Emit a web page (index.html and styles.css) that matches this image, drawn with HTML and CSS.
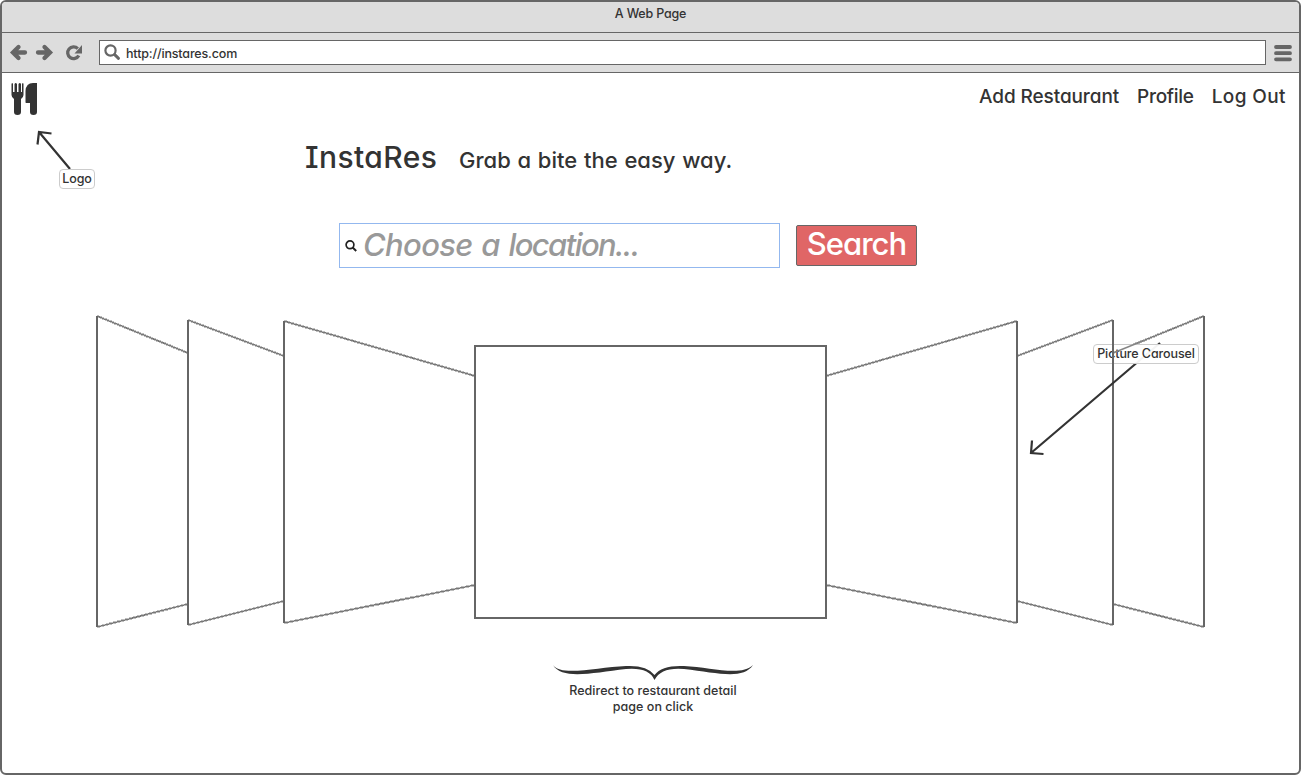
FILE: index.html
```html
<!DOCTYPE html>
<html lang="en">
<head>
<meta charset="utf-8">
<title>A Web Page</title>
<link rel="stylesheet" href="styles.css">
</head>
<body>
<div class="window">
  <header class="titlebar"><span class="window-title">A Web Page</span></header>
  <div class="toolbar">
    <svg class="nav-icons" viewBox="0 0 84 24" width="84" height="24">
      <g fill="none" stroke="#666" stroke-width="4.300">
        <path d="M25 11.500H14M18.500 6L13 11.500L18.500 17" stroke-linecap="round"/>
        <path d="M38 11.500H49M44.500 6L50 11.500L44.500 17" stroke-linecap="round"/>
        <path d="M77.800 7.600A5.900 5.900 0 1 0 78.800 14.500" stroke-width="3.300"/>
      </g>
      <path d="M82 4V12.500H74.500Z" fill="#666"/>
    </svg>
    <div class="address">
      <svg viewBox="0 0 18 18" width="18" height="18"><circle cx="6.500" cy="6.500" r="5.100" fill="none" stroke="#666" stroke-width="2.200"/><path d="M10.700 10.700L14.500 14.300" stroke="#666" stroke-width="3" stroke-linecap="round"/></svg>
      <span class="url">http://instares.com</span>
    </div>
    <svg class="menu-icon" viewBox="0 0 18 18" width="18" height="18"><path d="M2 3H16M2 9.200H16M2 15.300H16" stroke="#666" stroke-width="3.800" stroke-linecap="round"/></svg>
  </div>
  <main class="page">
    <nav class="site-nav">
      <svg class="logo" viewBox="0 0 28 34" width="28" height="34" fill="#333">
        <path d="M.5 2Q1.200 0 2 2V10H3.500V2Q4.700 0 6 2V10H7.500V2Q9 0 10 2V10H11V2Q12 0 12.500 2V13Q12.500 15 10 17V30Q10 33 6.500 33Q3 33 3 30V17Q.5 15 .5 13Z"/>
        <path d="M26 1V30Q26 33 22.500 33Q19 33 19 30V21H15Q14.500 21 14.500 20V9Q15 1 22 1Z"/>
      </svg>
      <div class="links"><a class="link-add">Add Restaurant</a><a class="link-profile">Profile</a><a class="link-logout">Log Out</a></div>
    </nav>
    <section class="hero"><h1>InstaRes</h1><p>Grab a bite the easy way.</p></section>
    <form class="search">
      <div class="field">
        <svg viewBox="0 0 12 12" width="12" height="12" fill="none" stroke="#222"><circle cx="5" cy="4.800" r="3.900" stroke-width="1.700"/><path d="M7.700 7.500L11.200 11" stroke-width="2"/></svg>
        <span class="placeholder">Choose a <span class="tight">location...</span></span>
      </div>
      <button type="button">Search</button>
    </form>
    <svg class="carousel" viewBox="96 314 1110 316" width="1110" height="316" fill="none" stroke="#666">
      <defs>
        <path id="slants" d="M97 316L188 353M188 320L284 356M284 321L475 376M97 627L188 604M188 625L284 601M284 623L475 585M1204 316L1113 353M1113 320L1017 356M1017 321L826 376M1204 627L1113 604M1113 625L1017 601M1017 623L826 585"/>
      </defs>
      <g shape-rendering="crispEdges">
        <use href="#slants" stroke="#bdbdbd" stroke-width="2.600"/>
        <use href="#slants" stroke="#777" stroke-width="1"/>
      </g>
      <path stroke-width="2" d="M97 316V627M188 320V625M284 321V623M1017 321V623M1113 320V625M1204 316V627M475 346H826V618H475Z"/>
    </svg>
    <div class="redirect-note">
      <svg viewBox="553 664 200 17" width="200" height="17" fill="#333"><path d="M553 665C561 677 598 667 626 666Q647 665 654.500 675Q662 665 684 666C710 667 741 677 753 665C743 680 718 673 684 669Q661 667 654.500 680Q649 667 626 669C592 673 562 680 553 665Z"/></svg>
      <p>Redirect to restaurant detail<br>page on click</p>
    </div>
    <svg class="arrow arrow-logo" viewBox="34 128 40 44" width="40" height="44"><path d="M70 169L39 132M37.500 144.500L39 132L51.500 133.500"/></svg>
    <span class="tag tag-logo">Logo</span>
    <svg class="arrow arrow-carousel" viewBox="1026 338 140 122" width="140" height="122"><path d="M1160 343L1031 453M1032 440.500L1031 453L1043.500 454"/></svg>
    <span class="tag tag-carousel">Picture Carousel</span>
    <svg class="over-tag" viewBox="1090 340 112 28" width="112" height="28" fill="none"><path d="M1155 336L1113 353" stroke="#858585" stroke-width="1.500"/><path d="M1113 340V368" stroke="#666" stroke-width="2"/></svg>
  </main>
</div>
</body>
</html>
```
FILE: styles.css
```css
* { box-sizing: border-box; }
body { margin: 0; background: #fff; color: #333; font-family: Inter, "Open Sans", sans-serif; font-feature-settings: "cv11", "ss03"; font-size: 12.5px; font-weight: 500; letter-spacing: -.1px; }
h1, p { margin: 0; font-weight: 500; }
svg { display: block; flex: none; }
.window { width: 1301px; height: 775px; border: 2px solid #666; border-radius: 6px; display: flex; flex-direction: column; overflow: hidden; background: #fff; }
.titlebar { height: 31px; background: #ddd; border-bottom: 1px solid #666; text-align: center; padding-top: 3px; line-height: 17px; letter-spacing: -.2px; }
.toolbar { height: 40px; background: #ddd; border-bottom: 1px solid #666; display: flex; align-items: center; }
.nav-icons { margin-left: -2px; margin-right: 15px; }
.address { height: 25px; width: 1167px; background: #fff; border: 1px solid #666; display: flex; align-items: center; padding-left: 4px; gap: 4px; }
.url { letter-spacing: -.15px; padding-top: 1px; }
.menu-icon { margin-left: 8px; }
.page { position: relative; flex: 1; }
.site-nav { height: 56px; display: flex; justify-content: space-between; padding: 9px 13px 0 9px; }
.links { display: flex; gap: 18px; padding-top: 1px; font-size: 19px; line-height: 28px; white-space: nowrap; }
.link-add { letter-spacing: -.1px; }
.link-profile { letter-spacing: -.3px; }
.link-logout { letter-spacing: .4px; }
.hero { display: flex; align-items: baseline; height: 94px; padding: 6px 0 0 303px; gap: 23px; white-space: nowrap; }
.hero h1 { width: 131px; font-size: 30px; line-height: 44px; letter-spacing: .4px; font-feature-settings: "cv11", "ss03", "cv08"; }
.hero p { font-size: 22px; letter-spacing: 0; word-spacing: .9px; }
.search { display: flex; align-items: center; margin-left: 337px; height: 45px; gap: 16px; }
.field { width: 441px; height: 45px; border: 1px solid #93b8ef; display: flex; align-items: center; padding-left: 5px; gap: 6px; }
.placeholder { color: #999; font-size: 31px; font-style: italic; letter-spacing: -.65px; word-spacing: 1px; white-space: nowrap; padding-bottom: 2px; }
.tight { letter-spacing: -1.6px; }
button { width: 121px; height: 41px; border: 1px solid #666; border-radius: 2px; background: #e06666; color: #fff; font: inherit; font-feature-settings: inherit; font-size: 31px; line-height: 36px; letter-spacing: -1px; padding: 0 0 3px; }
.carousel { margin: 46px 0 0 94px; }
.redirect-note { width: 200px; margin: 34px 0 0 551px; text-align: center; line-height: 16px; letter-spacing: .03px; white-space: nowrap; }
.redirect-note p { padding-top: 2px; }
.arrow { position: absolute; fill: none; stroke: #333; stroke-width: 2.2; }
.arrow-logo { left: 32px; top: 55px; }
.arrow-carousel { left: 1024px; top: 265px; }
.tag { position: absolute; background: rgba(255,255,255,.95); border: 1px solid #ccc; border-radius: 4px; height: 20px; line-height: 17px; text-align: center; white-space: nowrap; }
.tag-logo { left: 57px; top: 96px; width: 36px; }
.tag-carousel { left: 1091px; top: 271px; width: 106px; }
.over-tag { position: absolute; left: 1088px; top: 267px; }
```
